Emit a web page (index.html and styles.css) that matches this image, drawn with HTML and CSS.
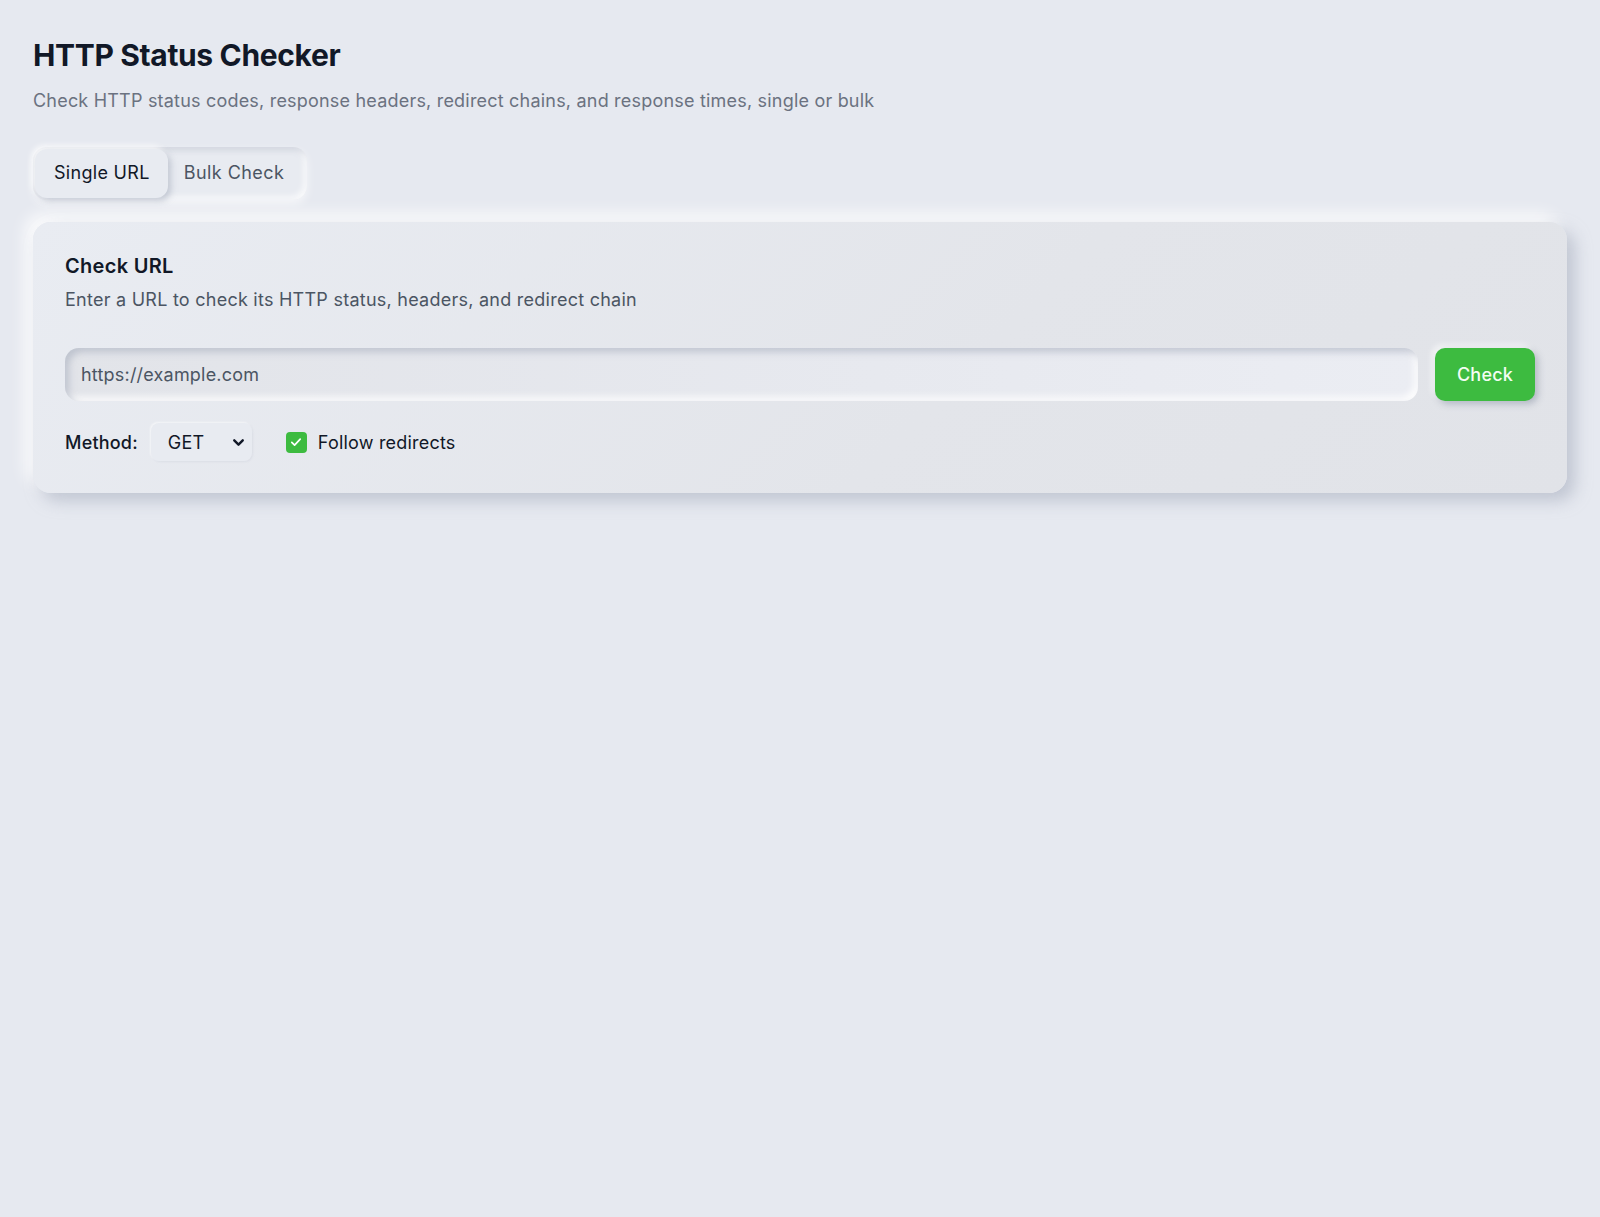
FILE: index.html
```html
<!DOCTYPE html>
<html lang="en">
<head>
<meta charset="utf-8">
<title>HTTP Status Checker</title>
<link rel="stylesheet" href="styles.css">
</head>
<body>
<main class="page">
  <header class="header">
    <h1 class="title">HTTP Status Checker</h1>
    <p class="subtitle">Check HTTP status codes, response headers, redirect chains, and response times, single or bulk</p>
  </header>

  <div class="tabs">
    <button class="tab tab-active">Single URL</button>
    <button class="tab">Bulk Check</button>
  </div>

  <section class="card">
    <h2 class="card-title">Check URL</h2>
    <p class="card-desc">Enter a URL to check its HTTP status, headers, and redirect chain</p>

    <div class="url-row">
      <div class="url-input">https://example.com</div>
      <button class="check-btn">Check</button>
    </div>

    <div class="options">
      <span class="opt-label">Method:</span>
      <div class="select">
        <span>GET</span>
        <svg class="chev" viewBox="0 0 24 24" width="17" height="17"><path d="M6 9l6 6 6-6" fill="none" stroke="#111827" stroke-width="3.4" stroke-linecap="round" stroke-linejoin="round"/></svg>
      </div>
      <label class="check">
        <span class="box"><svg viewBox="0 0 16 16" width="16" height="16"><path d="M3.8 8.3l2.8 2.8 5.6-6" fill="none" stroke="#fff" stroke-width="1.7" stroke-linecap="round" stroke-linejoin="round"/></svg></span>
        <span class="check-text">Follow redirects</span>
      </label>
    </div>
  </section>
</main>
</body>
</html>
```

FILE: styles.css
```css
* { box-sizing: border-box; }

html, body {
  margin: 0;
  padding: 0;
  background: #e6e9f0;
}

body {
  font-family: "Inter", "Noto Sans", sans-serif;
  color: #111827;
  min-height: 1217px;
  letter-spacing: 0.2px;
}

.page {
  padding: 31px 33px;
}

.header { margin: 0; }

.title {
  margin: 4px 0 0;
  font-size: 30px;
  font-weight: 700;
  letter-spacing: -0.35px;
  line-height: 40px;
  color: #111827;
}

.subtitle {
  margin: 12px 0 0;
  font-size: 18px;
  line-height: 28px;
  color: #6b7280;
}

.tabs {
  display: inline-flex;
  margin-top: 32px;
  padding: 2px;
  border-radius: 14px;
  background: #e8ebf1;
  box-shadow: inset 3px 3px 6px rgba(163, 170, 185, 0.35), inset -3px -3px 6px rgba(255, 255, 255, 0.8), 0 4px 10px rgba(255,255,255,0.6);
}

.tab {
  font-family: inherit;
  font-size: 18px;
  letter-spacing: 0.3px;
  line-height: 28px;
  border: 0;
  background: transparent;
  color: #4b5563;
  padding: 10px 18px 11px 19px;
  border-radius: 12px;
  cursor: pointer;
}

.tab + .tab {
  padding-left: 16px;
  padding-right: 21px;
  letter-spacing: 0.45px;
}

.tab-active {
  color: #111827;
  background: #e8ebf1;
  box-shadow: 3px 3px 6px rgba(163, 170, 185, 0.55), -3px -3px 6px rgba(255, 255, 255, 0.9);
}

.card {
  margin-top: 22px;
  padding: 30px 32px 32px;
  border-radius: 18px;
  background: linear-gradient(135deg, #e9ecf2 0%, #e3e5ea 60%, #e1e3e8 100%);
  box-shadow: 8px 8px 16px rgba(163, 170, 185, 0.55), -8px -8px 16px rgba(255, 255, 255, 0.85);
}

.card-title {
  margin: 0;
  font-size: 20px;
  font-weight: 600;
  letter-spacing: 0.3px;
  line-height: 28px;
  color: #111827;
}

.card-desc {
  margin: 6px 0 0;
  font-size: 18px;
  letter-spacing: 0.25px;
  line-height: 28px;
  color: #4b5563;
}

.url-row {
  display: flex;
  gap: 17px;
  margin-top: 34px;
}

.url-input {
  flex: 1;
  height: 53px;
  display: flex;
  align-items: center;
  padding: 0 16px;
  font-size: 18px;
  color: #4b5563;
  border-radius: 14px;
  background: linear-gradient(90deg, #e2e4e9 0%, #e7e9ef 60%, #ebedf3 100%);
  box-shadow: inset 4px 4px 7px rgba(163, 170, 185, 0.55), inset -4px -4px 7px rgba(255, 255, 255, 0.9);
}

.check-btn {
  width: 100px;
  height: 53px;
  border: 0;
  border-radius: 10px;
  background: #3dbb40;
  color: #f3fdf3;
  font-family: inherit;
  font-size: 18px;
  font-weight: 500;
  letter-spacing: 0.2px;
  box-shadow: 3px 3px 7px rgba(120, 130, 150, 0.45), -3px -3px 6px rgba(255, 255, 255, 0.7);
  cursor: pointer;
}

.options {
  display: flex;
  align-items: center;
  margin-top: 22px;
  height: 38px;
}

.opt-label {
  font-size: 18px;
  font-weight: 500;
  color: #111827;
}

.select {
  margin-left: 13px;
  display: flex;
  align-items: center;
  justify-content: space-between;
  width: 101px;
  height: 38px;
  padding: 0 4px 0 17px;
  font-size: 18px;
  color: #111827;
  border-radius: 8px;
  background: #e8ebf1;
  box-shadow: 1px 1px 2px rgba(163, 170, 185, 0.15), -1px -1px 2px rgba(255, 255, 255, 0.6);
}

.chev { margin-right: 1px; }

.check {
  display: flex;
  align-items: center;
  margin-left: 34px;
  gap: 11px;
}

.box {
  width: 21px;
  height: 21px;
  border-radius: 4px;
  background: #3dbb40;
  display: flex;
  align-items: center;
  justify-content: center;
}

.check-text {
  font-size: 18px;
  color: #111827;
}
```
